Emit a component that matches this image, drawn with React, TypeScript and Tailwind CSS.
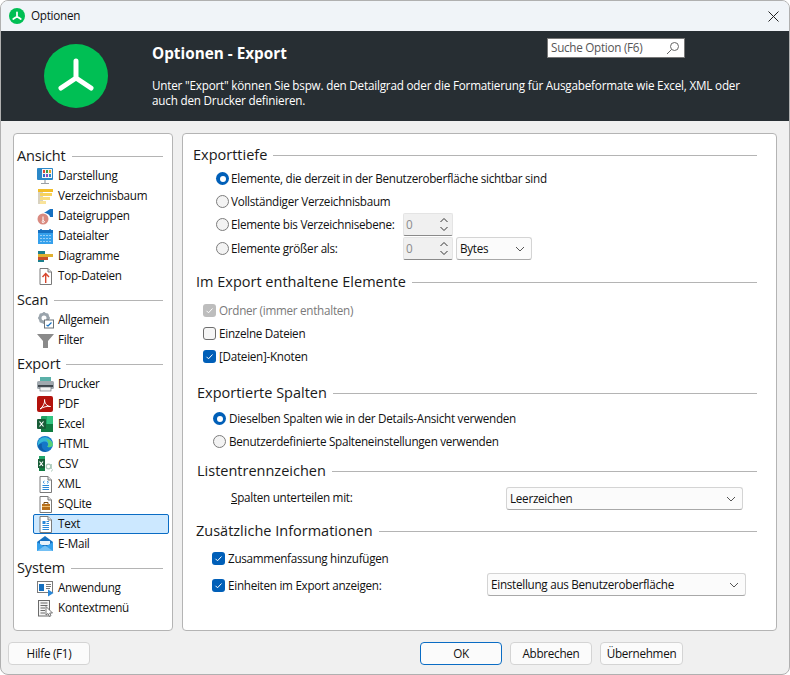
import React from 'react';

const Logo = ({ size, stroke }: { size: number; stroke: number }) => (
  <svg width={size} height={size} viewBox="0 0 64 64" className="shrink-0">
    <circle cx="32" cy="32" r="32" fill="#00bf54" />
    <path d="M32 17V34M32 34L17 44M32 34L47 44" stroke="#fff" strokeWidth={stroke} strokeLinecap="round" strokeLinejoin="round" fill="none" />
  </svg>
);

const Ic = ({ children }: { children: React.ReactNode }) => (
  <svg width="17" height="17" viewBox="0 0 17 17" className="shrink-0">{children}</svg>
);

const Doc = ({ children }: { children?: React.ReactNode }) => (
  <Ic>
    <path d="M3 .5H11L14.5 4V16.5H3Z" fill="#fff" stroke="#7a7a7a" />
    <path d="M11 .5V4H14.5" fill="#e4e4e4" stroke="#7a7a7a" />
    {children}
  </Ic>
);

const icons: Record<string, React.ReactNode> = {
  Darstellung: (
    <Ic>
      <rect x="0" y="0" width="16" height="12" rx="1" fill="#2b88c8" />
      <rect x="5" y="1" width="10" height="9" fill="#f5f5f5" />
      <rect x="6" y="2" width="2" height="3" fill="#d84a3a" />
      <rect x="9" y="2" width="2" height="3" fill="#3a9a4a" />
      <rect x="12" y="2" width="2" height="3" fill="#e8a020" />
      <rect x="6" y="6" width="2" height="3" fill="#2b6cc8" />
      <rect x="9" y="6" width="2" height="3" fill="#8a4ac0" />
      <rect x="12" y="6" width="2" height="3" fill="#2b88c8" />
      <path d="M8 12V15M4 15.5H12" stroke="#9aa0a6" strokeWidth="1.2" />
    </Ic>
  ),
  Verzeichnisbaum: (
    <Ic>
      <rect x="1" y="1" width="5" height="15" fill="#d8d2c0" />
      <rect x="1" y="1" width="15" height="3" fill="#f2bd28" />
      <rect x="3" y="5" width="12" height="3" fill="#f7d25c" />
      <rect x="3" y="9" width="10" height="3" fill="#f9dc7c" />
      <rect x="3" y="13" width="6" height="3" fill="#f9e39a" />
    </Ic>
  ),
  Dateigruppen: (
    <Ic>
      <path d="M7 5L13 1H16V9L13 9C13 7 10 5 7 5Z" fill="#1670c0" />
      <circle cx="6" cy="11" r="5.5" fill="#d98a80" />
      <path d="M6 8.5V13M7 13A1 1 0 1 1 6.9 12.9" stroke="#fff" strokeWidth="1" fill="none" />
    </Ic>
  ),
  Dateialter: (
    <Ic>
      <rect x="1" y="2" width="15" height="14" fill="#35a0ec" />
      <rect x="1" y="2" width="15" height="3" fill="#1670c0" />
      <path d="M4 1V3M13 1V3" stroke="#1670c0" strokeWidth="1.5" />
      <path d="M3.5 7.5H14M3.5 10.5H14M3.5 13.5H14" stroke="#fff" strokeDasharray="1 2" />
    </Ic>
  ),
  Diagramme: (
    <Ic>
      <rect x="1" y="3" width="7" height="3" fill="#1b7f8e" />
      <rect x="1" y="6" width="15" height="3" fill="#e0b030" />
      <rect x="1" y="9" width="10" height="3" fill="#c8502c" />
      <rect x="1" y="12" width="6" height="2" fill="#1b7f8e" />
    </Ic>
  ),
  'Top-Dateien': (
    <Doc>
      <path d="M8.7 15V6M5.5 9L8.7 5.5L12 9" stroke="#d8452c" strokeWidth="1.4" fill="none" />
    </Doc>
  ),
  Allgemein: (
    <Ic>
      <circle cx="7" cy="6" r="4" fill="none" stroke="#9aa4ac" strokeWidth="3" />
      <path d="M7 0V2M7 10V12M1 6H3M11 6H13M2.8 1.8L4 3M10 9L11.2 10.2M2.8 10.2L4 9M10 3L11.2 1.8" stroke="#9aa4ac" strokeWidth="1.6" />
      <rect x="7.5" y="8" width="9" height="8" fill="#fff" stroke="#6a7278" />
      <path d="M9.5 13L11 14L14.5 10.5" stroke="#1670c0" strokeWidth="1.2" fill="none" />
    </Ic>
  ),
  Filter: (
    <Ic>
      <path d="M0 2H17L11 9V16H6V9Z" fill="#8a8a8a" />
    </Ic>
  ),
  Drucker: (
    <Ic>
      <rect x="3" y="1" width="11" height="4" fill="#5ab0a8" />
      <rect x="0" y="5" width="17" height="8" rx="1.5" fill="#a0a8ae" />
      <rect x="1" y="9" width="15" height="2" fill="#3e464c" />
      <rect x="3" y="11" width="11" height="4" fill="#f2f2f2" stroke="#5a6268" strokeWidth=".6" />
    </Ic>
  ),
  PDF: (
    <Ic>
      <rect x="0" y="0" width="16" height="16" rx="2" fill="#b3120c" />
      <path d="M3 13C6 11 8 7 7.6 3.5C7.2 7 10 10.5 13.5 10.5C10 10 6 11 3 13Z" fill="none" stroke="#fff" strokeWidth="1" />
    </Ic>
  ),
  Excel: (
    <Ic>
      <rect x="4" y="0" width="12" height="16" rx="1" fill="#21a366" />
      <rect x="10" y="0" width="6" height="8" fill="#33c481" />
      <rect x="4" y="8" width="12" height="8" fill="#107c41" />
      <rect x="0" y="3" width="9" height="10" rx="1" fill="#185c37" />
      <path d="M2.5 5.5L6.5 10.5M6.5 5.5L2.5 10.5" stroke="#fff" strokeWidth="1.2" />
    </Ic>
  ),
  HTML: (
    <Ic>
      <circle cx="8" cy="8" r="8" fill="#1577c8" />
      <path d="M2 4C6 -1 14 1 16 8C16 11 12 12 10 10.5C12 9 11 5.5 8 5.5C4 5.5 2 8 1 10C.5 8 1 6 2 4Z" fill="#35b8d8" />
      <path d="M9 3.5C12 3 15.5 5 16 8.5C16 11 12 12 10.5 10.8C12 9 11.5 5 9 3.5Z" fill="#58cf7a" />
      <path d="M5 8C4 11 6 14.5 10 15.5C6 16.5 2 14 1 10C2 8.5 3.5 7.5 5 8Z" fill="#0f5ea8" />
    </Ic>
  ),
  CSV: (
    <Ic>
      <rect x="2" y="0" width="6" height="3" fill="#21a366" />
      <rect x="2" y="12" width="6" height="3" fill="#107c41" />
      <rect x="1" y="3" width="7" height="9" fill="#185c37" />
      <path d="M2.5 5.5L6 10M6 5.5L2.5 10" stroke="#fff" strokeWidth="1.2" />
      <circle cx="11.5" cy="10.5" r="2.3" fill="none" stroke="#a8c8b8" strokeWidth="1.2" />
      <path d="M14.3 8V13M15.5 13.5L14.5 15.5" stroke="#a8c8b8" strokeWidth="1" />
    </Ic>
  ),
  XML: (
    <Doc>
      <path d="M7.5 5L6 6.2L7.5 7.5M10 5L11.5 6.2L10 7.5" stroke="#2b88d8" strokeWidth=".9" fill="none" />
      <path d="M5.5 9.5H12M5.5 11.5H12M5.5 13.5H12" stroke="#2b88d8" />
    </Doc>
  ),
  SQLite: (
    <Doc>
      <rect x="5" y="8" width="8" height="6" fill="#b8701c" />
      <path d="M7 8V6.5H11V8" stroke="#7a4a10" fill="none" />
      <path d="M5 10.5H13" stroke="#f0c070" />
    </Doc>
  ),
  Text: (
    <Doc>
      <rect x="5.5" y="5" width="3" height="3" fill="#2b88d8" />
      <path d="M9.5 5.5H12M9.5 7.5H12M5.5 9.5H12M5.5 11.5H12M5.5 13.5H12" stroke="#2b88d8" />
    </Doc>
  ),
  'E-Mail': (
    <Ic>
      <path d="M0 6L8 0L16 6V15H0Z" fill="#1670c0" />
      <path d="M3 5H13V9H3Z" fill="#e8f2fa" />
      <path d="M0 6L8 11L16 6V15H0Z" fill="#35a0ec" />
      <path d="M0 15L8 9.5L16 15Z" fill="#74c0f4" />
    </Ic>
  ),
  Anwendung: (
    <Ic>
      <rect x=".5" y="1.5" width="15" height="11" fill="#fff" stroke="#7a7a7a" />
      <rect x="2" y="4" width="5" height="7" fill="#1670c0" />
      <path d="M9 4.5H14M9 6.5H14M9 8.5H13" stroke="#7a7a7a" />
      <path d="M11 9.5L16.5 13L11 16.5Z" fill="#2b88d8" />
    </Ic>
  ),
  Kontextmenü: (
    <Ic>
      <rect x="1.5" y=".5" width="11" height="15.5" fill="#f4f4f4" stroke="#6a6a6a" />
      <path d="M3.5 3H10.5M3.5 5.5H10.5M3.5 8H8M3.5 10.5H8M3.5 13H8" stroke="#6a6a6a" />
      <path d="M9 6.5V15L11 13.5L12.5 16.5L14 15.7L12.7 13H15.5Z" fill="#fff" stroke="#555" strokeWidth=".8" />
    </Ic>
  ),
};

const groups: { title: string; items: string[] }[] = [
  { title: 'Ansicht', items: ['Darstellung', 'Verzeichnisbaum', 'Dateigruppen', 'Dateialter', 'Diagramme', 'Top-Dateien'] },
  { title: 'Scan', items: ['Allgemein', 'Filter'] },
  { title: 'Export', items: ['Drucker', 'PDF', 'Excel', 'HTML', 'CSV', 'XML', 'SQLite', 'Text', 'E-Mail'] },
  { title: 'System', items: ['Anwendung', 'Kontextmenü'] },
];

function Sidebar() {
  return (
    <div className="w-[160px] shrink-0 rounded-[4px] border border-[#b4b4b4] bg-white pt-[12px] pl-[3px] pr-[3px]">
      {groups.map((g) => (
        <div key={g.title} className="mb-1">
          <div className="flex h-5 items-center pr-[6px] text-[14.5px] tracking-[-0.15px] text-[#1a1a1a]">
            <span>{g.title}</span>
            <span className="ml-[6px] h-px flex-1 bg-[#b4b4b4]" />
          </div>
          {g.items.map((item) => (
            <div
              key={item}
              className={
                item === 'Text'
                  ? 'ml-[16px] flex h-5 items-center gap-[4px] rounded-[2px] border border-[#0a6cc4] bg-[#cce8ff] pl-[3px] text-[#111]'
                  : 'ml-[16px] flex h-5 items-center gap-[4px] border border-transparent pl-[3px] text-[#111]'
              }
            >
              {icons[item]}
              <span>{item}</span>
            </div>
          ))}
        </div>
      ))}
    </div>
  );
}

function Heading({ text, className }: { text: string; className: string }) {
  return (
    <div className={'flex h-5 items-center text-[14.5px] tracking-normal text-[#1a1a1a] ' + className}>
      <span>{text}</span>
      <span className="ml-[6px] h-px flex-1 bg-[#b4b4b4]" />
    </div>
  );
}

function Radio({ checked, label, className }: { checked?: boolean; label: string; className: string }) {
  return (
    <div className={'flex h-[23px] items-center ' + className}>
      {checked ? (
        <span className="flex h-[13px] w-[13px] shrink-0 items-center justify-center rounded-full bg-[#005fb8]">
          <span className="h-[6px] w-[6px] rounded-full bg-white" />
        </span>
      ) : (
        <span className="h-[13px] w-[13px] shrink-0 rounded-full border border-[#7c7c7c] bg-[#f3f3f3]" />
      )}
      <span className="whitespace-nowrap">{label}</span>
    </div>
  );
}

function Check({ state, label, className }: { state: 'on' | 'off' | 'disabled'; label: string; className: string }) {
  return (
    <div className={'flex h-[23px] items-center gap-[3px] ' + className}>
      {state === 'off' ? (
        <span className="h-[13px] w-[13px] shrink-0 rounded-[3px] border border-[#6e6e6e] bg-[#f6f6f6]" />
      ) : (
        <span className={state === 'on' ? 'flex h-[13px] w-[13px] shrink-0 items-center justify-center rounded-[3px] bg-[#005fb8]' : 'flex h-[13px] w-[13px] shrink-0 items-center justify-center rounded-[3px] bg-[#bdbdbd]'}>
          <svg width="9" height="9" viewBox="0 0 9 9">
            <path d="M1.5 4.8L3.5 6.8L7.5 2.5" stroke="#fff" strokeWidth="1" fill="none" />
          </svg>
        </span>
      )}
      <span className={state === 'disabled' ? 'whitespace-nowrap text-[#7a7a7a]' : 'whitespace-nowrap'}>{label}</span>
    </div>
  );
}

const Chevron = () => (
  <svg width="10" height="6" viewBox="0 0 10 6" className="shrink-0">
    <path d="M1 1L5 5L9 1" stroke="#555" strokeWidth="1" fill="none" />
  </svg>
);

function Combo({ label, className }: { label: string; className: string }) {
  return (
    <div className={'flex h-[23px] items-center justify-between rounded-[3px] border border-[#d4d4d4] border-b-[#a8a8a8] bg-[#fbfbfb] pl-[3px] pr-[6px] ' + className}>
      <span className="whitespace-nowrap">{label}</span>
      <Chevron />
    </div>
  );
}

function Spinner() {
  return (
    <div className="flex h-[23px] w-[50px] items-center justify-between rounded-[2px] border border-[#e4e4e4] border-b-[#8a8a8a] bg-[#f0f0f0] pl-[2px] pr-[3px] text-[#8c8c8c]">
      <span>0</span>
      <svg width="10" height="15" viewBox="0 0 10 15">
        <path d="M1.5 5L5 1.5L8.5 5M1.5 10L5 13.5L8.5 10" stroke="#333" strokeWidth="1" fill="none" />
      </svg>
    </div>
  );
}

function Btn({ label, className }: { label: string; className: string }) {
  return (
    <div className={'flex h-[23px] items-center justify-center rounded-[4px] border bg-[#fbfbfb] text-[#111] ' + className}>{label}</div>
  );
}

export default function App() {
  return (
    <div className="flex h-[675px] w-[790px] flex-col overflow-hidden rounded-lg border border-[#b0b0b0] bg-[#f0f0f0] text-[11.7px] tracking-[-0.28px] text-[#111] [font-family:'Open_Sans','Liberation_Sans',sans-serif]">
      {/* title bar */}
      <div className="flex h-[30px] shrink-0 items-center bg-[#f0f4f8] pl-[8px] pr-[10px]">
        <Logo size={16} stroke={7} />
        <span className="ml-[6px]">Optionen</span>
        <svg width="11" height="11" viewBox="0 0 11 11" className="ml-auto">
          <path d="M.5 .5L10.5 10.5M10.5 .5L.5 10.5" stroke="#222" strokeWidth="1" />
        </svg>
      </div>

      {/* header */}
      <div className="flex h-[90px] shrink-0 bg-[#272e33] pl-[43px] text-white">
        <div className="mt-[13px]">
          <Logo size={64} stroke={5} />
        </div>
        <div className="ml-[44px] mr-[40px] flex-1">
          <div className="flex items-start justify-between pt-[7px] pr-[64px]">
            <span className="mt-[4px] text-[15.3px] font-bold tracking-normal">Optionen - Export</span>
            <div className="flex h-[20px] w-[138px] items-center justify-between border border-[#777] bg-white pl-[3px] pr-[4px] text-[#555]">
              <span>Suche Option (F6)</span>
              <svg width="14" height="14" viewBox="0 0 14 14">
                <circle cx="8.5" cy="5.5" r="4" stroke="#666" fill="none" />
                <path d="M5.5 8.5L1 13" stroke="#666" />
              </svg>
            </div>
          </div>
          <p className="mt-[13px] leading-[15px] tracking-[-0.2px]">
            Unter "Export" können Sie bspw. den Detailgrad oder die Formatierung für Ausgabeformate wie Excel, XML oder auch den Drucker definieren.
          </p>
        </div>
      </div>

      {/* body */}
      <div className="mt-[12px] flex h-[498px] shrink-0 gap-[9px] pl-[12px]">
        <Sidebar />
        <div className="w-[595px] shrink-0 rounded-[4px] border border-[#b4b4b4] bg-white pt-[11px] pr-[19px]">
          <Heading text="Exporttiefe" className="ml-[10px]" />
          <Radio checked label="Elemente, die derzeit in der Benutzeroberfläche sichtbar sind" className="ml-[33px] mt-[2px] gap-[2px]" />
          <Radio label="Vollständiger Verzeichnisbaum" className="ml-[33px] gap-[2px]" />
          <div className="flex items-center">
            <Radio label="Elemente bis Verzeichnisebene:" className="ml-[33px] w-[187px] gap-[2px]" />
            <Spinner />
          </div>
          <div className="mt-px flex items-center">
            <Radio label="Elemente größer als:" className="ml-[33px] w-[187px] gap-[2px]" />
            <Spinner />
            <Combo label="Bytes" className="ml-[3px] w-[76px]" />
          </div>

          <Heading text="Im Export enthaltene Elemente" className="ml-[13px] mt-[12px]" />
          <Check state="disabled" label="Ordner (immer enthalten)" className="ml-[20px] mt-[7px]" />
          <Check state="off" label="Einzelne Dateien" className="ml-[20px]" />
          <Check state="on" label="[Dateien]-Knoten" className="ml-[20px]" />

          <Heading text="Exportierte Spalten" className="ml-[14px] mt-[15px]" />
          <Radio checked label="Dieselben Spalten wie in der Details-Ansicht verwenden" className="ml-[30px] mt-[4px] gap-[3px]" />
          <Radio label="Benutzerdefinierte Spalteneinstellungen verwenden" className="ml-[30px] gap-[3px]" />

          <Heading text="Listentrennzeichen" className="ml-[14px] mt-[8px]" />
          <div className="ml-[48px] mt-[6px] flex h-[23px] items-center">
            <span className="w-[275px] pb-[2px]"><span className="underline">S</span>palten unterteilen mit:</span>
            <Combo label="Leerzeichen" className="w-[237px]" />
          </div>

          <Heading text="Zusätzliche Informationen" className="ml-[13px] mt-[11px]" />
          <Check state="on" label="Zusammenfassung hinzufügen" className="ml-[29px] mt-[6px]" />
          <div className="mt-[3px] flex items-center">
            <Check state="on" label="Einheiten im Export anzeigen:" className="ml-[29px] w-[275px] pt-[2px]" />
            <Combo label="Einstellung aus Benutzeroberfläche" className="w-[259px]" />
          </div>
        </div>
      </div>

      {/* footer */}
      <div className="mt-[11px] flex pl-[7px]">
        <Btn label="Hilfe (F1)" className="w-[82px] border-[#d4d4d4]" />
        <Btn label="OK" className="ml-[330px] w-[82px] border-[#0a6cc4]" />
        <Btn label="Abbrechen" className="ml-[8px] w-[82px] border-[#d4d4d4]" />
        <Btn label="Übernehmen" className="ml-[8px] w-[83px] border-[#d4d4d4]" />
      </div>
    </div>
  );
}
